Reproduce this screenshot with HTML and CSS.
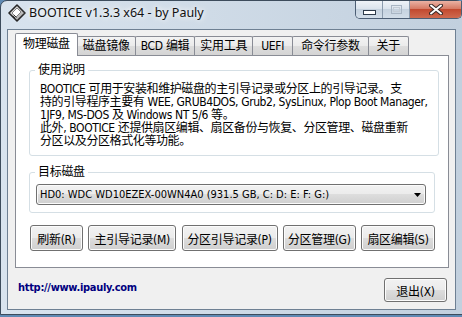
FILE: index.html
```html
<!DOCTYPE html>
<html lang="zh-CN">
<head>
  <meta charset="UTF-8">
  <title>BOOTICE v1.3.3 x64 - by Pauly</title>
  <link rel="stylesheet" href="styles.css">
</head>
<body>

  <div class="window">
    <div class="title-bar">
      <svg class="app-icon" width="18" height="18" viewBox="0 0 18 18">
        <defs>
          <linearGradient id="disk-fill" x1="0" y1="0" x2="1" y2="1">
            <stop offset="0" stop-color="#f4f4f4"/>
            <stop offset="1" stop-color="#9a9a9a"/>
          </linearGradient>
        </defs>
        <path d="M9 1 L17 9 L9 17 L1 9 Z" fill="url(#disk-fill)" stroke="#262626" stroke-width="1.6" stroke-linejoin="round"/>
        <path d="M9 4 L13 8 L8 13 L4 9 Z" fill="#fff" stroke="#6a6a6a" stroke-width="0.8"/>
        <path d="M6 11 L8.5 13.5 M5 12 L7 14" stroke="#333" stroke-width="1"/>
      </svg>
      <span class="title-text">BOOTICE v1.3.3 x64 - by Pauly</span>
      <div class="caption-buttons">
        <span class="cap-btn cap-min">
          <svg width="13" height="5" viewBox="0 0 13 5"><rect x="0.5" y="0.5" width="12" height="4" fill="#fff" stroke="#2e3b4a"/></svg>
        </span>
        <span class="cap-btn cap-max">
          <svg width="11" height="9" viewBox="0 0 11 9"><rect x="0.5" y="0.5" width="10" height="8" fill="none" stroke="#a9b6c4"/><rect x="2.5" y="2.5" width="6" height="4" fill="none" stroke="#c3ccd6"/></svg>
        </span>
        <span class="cap-btn cap-close">
          <svg width="14" height="11" viewBox="0 0 14 11">
            <path d="M2 1.5 L12 9.5 M12 1.5 L2 9.5" stroke="#3a2a28" stroke-width="4" stroke-linecap="round"/>
            <path d="M2 1.5 L12 9.5 M12 1.5 L2 9.5" stroke="#fff" stroke-width="2" stroke-linecap="round"/>
          </svg>
        </span>
      </div>
    </div>

    <div class="client">
      <div class="tab-strip">
        <span class="tab active">物理磁盘</span>
        <span class="tab">磁盘镜像</span>
        <span class="tab">BCD 编辑</span>
        <span class="tab">实用工具</span>
        <span class="tab">UEFI</span>
        <span class="tab tab-wide">命令行参数</span>
        <span class="tab">关于</span>
      </div>

      <div class="tab-panel">
        <fieldset class="group usage-group">
          <legend>使用说明</legend>
          <p class="usage-text">BOOTICE 可用于安装和维护磁盘的主引导记录或分区上的引导记录。支<br>持的引导程序主要有 WEE, GRUB4DOS, Grub2, SysLinux, Plop Boot Manager,<br>1JF9, MS-DOS 及 Windows NT 5/6 等。<br>此外, BOOTICE 还提供扇区编辑、扇区备份与恢复、分区管理、磁盘重新<br>分区以及分区格式化等功能。</p>
        </fieldset>

        <fieldset class="group disk-group">
          <legend>目标磁盘</legend>
          <div class="combo">
            <span class="combo-value">HD0: WDC WD10EZEX-00WN4A0 (931.5 GB, C: D: E: F: G:)</span>
            <svg class="combo-arrow" width="7" height="4" viewBox="0 0 7 4"><path d="M0 0 H7 L3.5 4 Z" fill="#000"/></svg>
          </div>
        </fieldset>

        <div class="actions">
          <button class="btn">刷新(R)</button>
          <button class="btn">主引导记录(M)</button>
          <button class="btn">分区引导记录(P)</button>
          <button class="btn">分区管理(G)</button>
          <button class="btn">扇区编辑(S)</button>
        </div>
      </div>

      <div class="footer">
        <a class="site-link" href="#">http://www.ipauly.com</a>
        <button class="btn exit-btn">退出(X)</button>
      </div>
    </div>
  </div>

</body>
</html>
```

FILE: styles.css
```css
* {
  margin: 0;
  padding: 0;
  box-sizing: border-box;
}

body {
  width: 462px;
  height: 317px;
  overflow: hidden;
  background: #5f8ab4;
  font-family: "DejaVu Sans", "Noto Sans CJK SC", sans-serif;
  font-stretch: condensed;
  font-size: 12px;
  letter-spacing: -0.3px;
  color: #000;
}

/* window frame (aero glass) */
.window {
  width: 463px;
  height: 315px;
  border: 1px solid #3d4c5c;
  border-radius: 7px 7px 0 0;
  background: linear-gradient(90deg, #d8e3ee 0%, #cfdbe7 45%, #c2d0de 100%);
  padding: 0 6px 4px 6px;
  display: flex;
  flex-direction: column;
}

.title-bar {
  height: 28px;
  display: flex;
  align-items: flex-start;
}

.app-icon {
  margin: 3px 0 0 1px;
}

.title-text {
  margin: 3px 0 0 3px;
  font-family: "Noto Sans", sans-serif;
  font-stretch: normal;
  font-size: 12.5px;
  letter-spacing: 0;
  line-height: 18px;
  color: #111;
  text-shadow: 0 0 5px #fff, 0 0 8px #fff;
}

.caption-buttons {
  margin-left: auto;
  margin-right: -6px;
  height: 18px;
  display: flex;
  border: 1px solid #4c5e74;
  border-top: none;
  border-radius: 0 0 5px 5px;
  overflow: hidden;
}

.cap-btn {
  display: flex;
  align-items: center;
  justify-content: center;
  width: 27px;
  background: linear-gradient(180deg, #eef3f8 0%, #dbe4ed 45%, #c5d2df 50%, #d2dde8 100%);
  border-right: 1px solid #8b9bad;
}

.cap-min svg {
  margin-top: 6px;
}

.cap-close {
  width: 51px;
  border-right: none;
  background: linear-gradient(180deg, #eab2a4 0%, #d67b65 45%, #c24a30 50%, #cf6a4f 100%);
}

/* client area */
.client {
  flex: 1;
  background: #f0f0f0;
  border: 1px solid #6e8093;
  padding: 3px 6px 0 7px;
  display: flex;
  flex-direction: column;
}

.tab-strip {
  height: 22px;
  display: flex;
  align-items: flex-end;
  position: relative;
  z-index: 1;
}

.tab {
  height: 19px;
  min-width: 41px;
  margin-left: -1px;
  padding: 0 5px;
  border: 1px solid #898c95;
  border-bottom: none;
  border-radius: 2px 2px 0 0;
  line-height: 18px;
  text-align: center;
  white-space: nowrap;
  background: linear-gradient(180deg, #f3f3f3 0%, #ebebeb 50%, #dddddd 50%, #d4d4d4 100%);
}

.tab-wide {
  padding: 0 8px;
}

.tab.active {
  height: 23px;
  margin-left: 0;
  margin-bottom: -1px;
  padding: 0 7px;
  line-height: 20px;
  background: #fff;
  position: relative;
  z-index: 2;
}

.tab-panel {
  height: 213px;
  border: 1px solid #898c95;
  background: #fff;
  padding: 0 13px;
}

.group {
  border: 1px solid #d5dfe5;
  border-radius: 3px;
}

.group legend {
  margin-left: -5px;
  padding: 0 3px;
  line-height: 14px;
}

.usage-group {
  margin-top: 7px;
  padding: 6px 10px 7px 10px;
}

.usage-text {
  line-height: 13px;
  letter-spacing: -0.4px;
  white-space: nowrap;
}

.disk-group {
  margin-top: 9px;
  padding: 5px 8px 7px 6px;
}

.disk-group legend {
  margin-left: -1px;
}

.combo {
  height: 21px;
  display: flex;
  align-items: center;
  justify-content: space-between;
  padding: 0 4px 0 3px;
  border: 1px solid #707070;
  border-radius: 3px;
  background: linear-gradient(180deg, #f2f2f2 0%, #ebebeb 50%, #dddddd 50%, #cfcfcf 100%);
  box-shadow: inset 0 0 0 1px #fbfbfb;
}

.combo-value {
  font-size: 11px;
  letter-spacing: 0;
}

.actions {
  margin-top: 12px;
  padding-left: 1px;
  display: grid;
  grid-template-columns: 53px 88px 96px 73px 74px;
  justify-content: space-between;
}

.btn {
  height: 26px;
  border: 1px solid #707070;
  border-radius: 3px;
  background: linear-gradient(180deg, #f2f2f2 0%, #ebebeb 50%, #dddddd 50%, #cfcfcf 100%);
  box-shadow: inset 0 0 0 1px #fcfcfc;
  font: inherit;
  letter-spacing: inherit;
  color: #000;
  white-space: nowrap;
}

.footer {
  margin-top: 10px;
  display: flex;
  justify-content: space-between;
  align-items: flex-start;
}

.site-link {
  margin: 3px 0 0 3px;
  font-family: "DejaVu Sans", sans-serif;
  font-weight: bold;
  font-size: 11px;
  letter-spacing: -0.3px;
  line-height: 14px;
  color: #00007f;
  text-decoration: none;
}

.exit-btn {
  width: 63px;
  height: 24px;
  margin-right: 2px;
}
```
